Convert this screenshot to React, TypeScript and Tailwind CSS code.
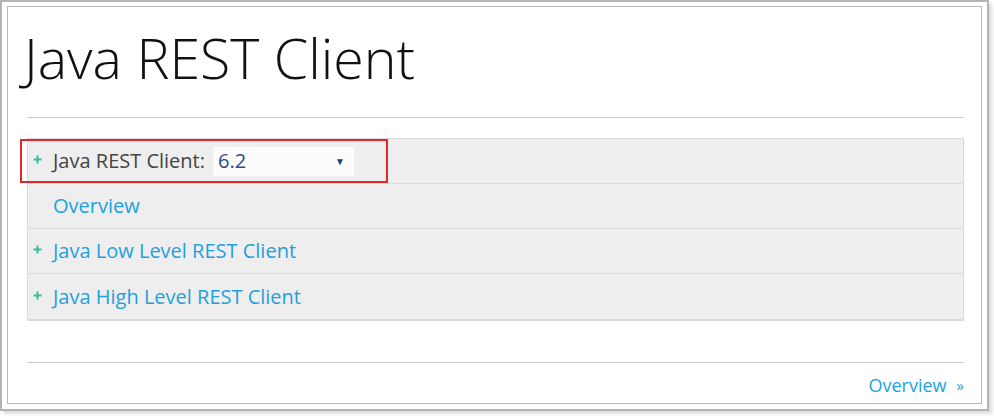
import type { FC } from "react"

// small teal plus shown before expandable rows
const Plus: FC = () => (
    <svg width="9" height="9" viewBox="0 0 9 9" className="shrink-0 -mt-[3px]">
        <path d="M4.5 0.5v8M0.5 4.5h8" stroke="#36bba0" strokeWidth="2" />
    </svg>
)

interface RowProps {
    label: string
    expandable?: boolean
    last?: boolean
}

const NavRow: FC<RowProps> = ({ label, expandable, last }) => (
    <div className={last ? "h-[45px] flex items-center pl-[5px]" : "h-[45px] flex items-center border-b border-[#dcdcdc] pl-[5px]"}>
        <div className="w-[9px] mr-[11px] flex items-center">{expandable && <Plus />}</div>
        <a className="text-[20px] text-[#1ea1de] leading-none">{label}</a>
    </div>
)

const App: FC = () => {
    return (
        <div
            className="w-[994px] h-[416px] bg-white relative overflow-hidden"
            style={{ fontFamily: '"Open Sans", "Liberation Sans", sans-serif' }}
        >
            {/* outer window frame */}
            <div className="w-[989px] h-[411px] border-2 border-[#b4b4b4] pt-[4px] pb-[5px] px-[5px] shadow-[3px_3px_3px_rgba(0,0,0,0.13)]">
                <div className="h-full border border-[#b9b9b9] pl-[19px] pr-[17px] flex flex-col">
                    <h1 className="mt-[13px] text-[55.5px] leading-[76px] font-light text-[#111] -ml-[3px]">
                        Java REST Client
                    </h1>
                    <div className="mt-[21px] h-px bg-[#cccccc]" />

                    {/* nav panel */}
                    <div className="mt-[20px] bg-[#eeeeee] border border-[#dadada] border-b-2">
                        <div className="h-[45px] flex items-center border-b border-[#dcdcdc] pl-[5px]">
                            <div className="w-[9px] mr-[11px] flex items-center">
                                <Plus />
                            </div>
                            <span className="text-[20px] text-[#444] leading-none">Java REST Client:</span>
                            <div className="ml-[8px] w-[141px] h-[29px] bg-[#fcfcfc] flex items-center justify-between pl-[5px] pr-[9px]">
                                <span className="text-[20px] text-[#2a4a8c] leading-none">6.2</span>
                                <span className="text-[10px] text-[#2a3d7c] leading-none">▼</span>
                            </div>
                        </div>
                        <NavRow label="Overview" />
                        <NavRow label="Java Low Level REST Client" expandable />
                        <NavRow label="Java High Level REST Client" expandable last />
                    </div>

                    <div className="mt-[41px] h-px bg-[#cccccc]" />
                    <div className="mt-[10px] flex justify-end items-center text-[18px] text-[#1ea1de] leading-[24px]">
                        <a>Overview</a>
                        <span className="ml-[10px] text-[15px]">»</span>
                    </div>
                </div>
            </div>

            {/* red highlight annotation */}
            <div className="absolute left-[20px] top-[139px] w-[368px] h-[44px] border-2 border-[#e5262d]" />
        </div>
    )
}

export default App
